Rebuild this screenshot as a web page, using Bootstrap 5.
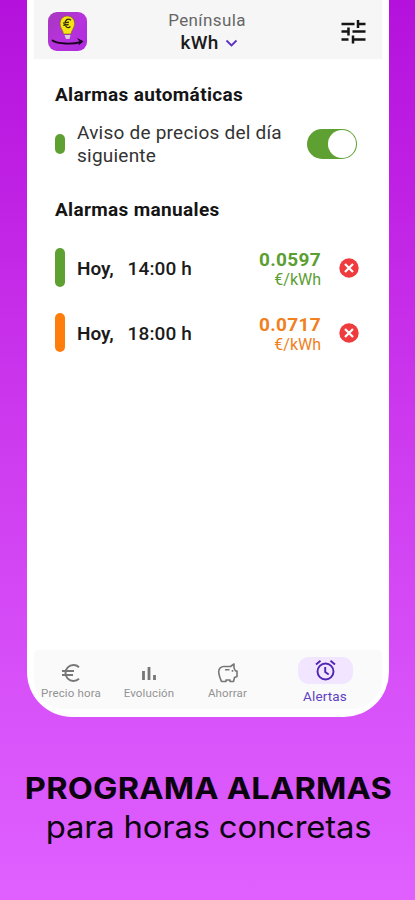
<!DOCTYPE html>
<html lang="es">
<head>
<meta charset="utf-8">
<meta name="viewport" content="width=device-width, initial-scale=1">
<title>Alarmas</title>
<link rel="stylesheet" href="https://cdn.jsdelivr.net/npm/bootstrap@5.3.0/dist/css/bootstrap.min.css">
<style>
body{font-family:Roboto,"Liberation Sans",sans-serif;color:#1b1b1b;height:900px;overflow:hidden;background:linear-gradient(180deg,#b412dc 0,#c022e4 200px,#cd3aee 430px,#d750f8 680px,#df60ff 900px)}
.phone{width:362px;height:717px;margin-left:27px;background:#fff;border-radius:0 0 45px 45px;padding:0 7px 8px}
.topbar{height:59px;background:#f6f6f6;padding:11px 16px 0 14px}
.logo{width:39px;height:40px;margin-top:1px}
.region{font-size:17px;line-height:20px;letter-spacing:.4px;color:#666;margin-top:-1px}
.unit{font-size:19px;line-height:26px;letter-spacing:.3px;font-weight:500;padding-left:4px}
.chevron{margin-left:6px}
.title-box{margin-right:14px}
.content{padding:0 21px}
.heading{font-size:19px;line-height:24px;font-weight:700;letter-spacing:.34px;color:#151515}
.heading-first{margin-top:24px}
.heading-next{margin-top:30px}
.auto-row{height:48px;margin-top:13px}
.notice{font-size:19px;line-height:23px;letter-spacing:.23px;color:#333;width:230px}
.pill{width:10px;border-radius:5px;flex:none;margin-right:12px}
.pill-sm{height:20px}
.pill-lg{height:39px}
.green{color:#5b9e32}.orange{color:#f08020}
.bg-green{background:#5fa033}.bg-orange{background:#ff7d0a}
.switch{width:50px;height:30px;border-radius:15px;background:#5fa033;padding:1px}
.knob{width:28px;height:28px;border-radius:50%;background:#fff}
.alarm-list{padding-top:13px}
.alarm{height:65px}
.day,.hour{padding-top:3px}
.day{font-size:19px;font-weight:600;letter-spacing:0;width:50.5px}
.hour{font-size:19px;font-weight:500;letter-spacing:.15px}
.price{font-size:19px;line-height:23px;font-weight:700;letter-spacing:.35px}
.price-box{padding-top:1px}
.per{font-size:16px;line-height:18px;letter-spacing:0}
.remove{width:20px;height:20px;margin:0 2px 0 18px;flex:none}
.tabs{height:59px;background:#fafafa;border-radius:4px 4px 30px 30px}
.tab{font-size:11.500px;line-height:14px;letter-spacing:.15px;color:#929292;padding-top:13px}
.tab svg{margin-bottom:3px}
.tab-active{font-size:13.500px;line-height:16px;color:#6040c4;padding:7px 0 0 3px}
.tab-pill{width:55px;height:27px;border-radius:11px;background:#f1e5ff;margin-bottom:4px}
.tab-pill svg{margin:0}
.caption{font-family:Inter,"Liberation Sans",sans-serif;color:#0c0310;margin-top:52px;padding-left:2px}
.cap-a{font-size:30px;line-height:38px;font-weight:700;letter-spacing:.2px;transform:scaleX(1.085)}
.cap-b{font-size:31px;line-height:39px;font-weight:400;letter-spacing:-.2px;transform:scaleX(1.06)}
</style>
<script src="https://cdn.jsdelivr.net/npm/bootstrap@5.3.0/dist/js/bootstrap.bundle.min.js"></script>
</head>
<body>
<main class="phone d-flex flex-column">
  <header class="topbar d-flex justify-content-between align-items-start">
    <svg class="logo" viewBox="0 0 39 40">
      <defs><linearGradient id="lg" x1="0" y1="0" x2="1" y2="1"><stop offset="0" stop-color="#a637bd"/><stop offset=".5" stop-color="#b633dc"/><stop offset="1" stop-color="#b02ae0"/></linearGradient></defs>
      <rect width="39" height="39" rx="9" fill="url(#lg)"/>
      <path d="M15.500 22C15 18 12 16 12 11.200a7.300 7.300 0 0 1 14.600 0c0 4.800-3 6.800-3.600 10.800z" fill="#f7e413" stroke="#756015" stroke-width=".6"/>
      <path d="M16.500 23h6l-1 4h-3.500z" fill="#d7c9df"/>
      <path d="M23 8.300c-3-2.600-6.200-.4-6 3.500.2 3.200 3 5 5.400 2.700M15 11.200l6-1M15.200 13.300l5.400-.8" fill="none" stroke="#312b05" stroke-width="1.300"/>
      <path d="M4.500 28.500c5 3.500 20 4.200 29 1.300" fill="none" stroke="#18031d" stroke-width="1.900" stroke-linecap="round"/>
      <path d="M29 26l6.500 3.300-5 4.200 1-4z" fill="#18031d"/>
    </svg>
    <div class="title-box text-center">
      <div class="region">Península</div>
      <div class="unit d-flex align-items-center justify-content-center">kWh
        <svg class="chevron" width="13" height="9" viewBox="0 0 13 9"><path d="M1.500 1.500l5 5 5-5" fill="none" stroke="#5a31c8" stroke-width="1.800"/></svg>
      </div>
    </div>
    <svg class="mt-2" width="25" height="25" viewBox="0 0 25 25" stroke="#151515" stroke-width="2.500" fill="none"><path d="M.5 5h13M17 5h7.500M17 1v8M.5 12.500h7M11.500 12.500h13M7.500 8.500v8M.5 20.500h7M12 20.500h12.500M12 16.500v8"/></svg>
  </header>
  <section class="content flex-grow-1">
    <h2 class="heading heading-first mb-0">Alarmas automáticas</h2>
    <div class="auto-row d-flex align-items-center">
      <span class="pill pill-sm bg-green"></span>
      <div class="notice">Aviso de precios del día siguiente</div>
      <div class="switch d-flex justify-content-end"><span class="knob"></span></div>
    </div>
    <h2 class="heading heading-next mb-0">Alarmas manuales</h2>
    <div class="alarm-list">
      <div class="alarm d-flex align-items-center">
        <span class="pill pill-lg bg-green"></span>
        <span class="day">Hoy,</span><span class="hour">14:00 h</span>
        <div class="price-box ms-auto text-end green"><div class="price">0.0597</div><div class="per">€/kWh</div></div>
        <svg class="remove" viewBox="0 0 20 20"><circle cx="10" cy="10" r="9.700" fill="#ef3b3d"/><path d="M6 6l8 8M14 6l-8 8" stroke="#fff" stroke-width="2.200"/></svg>
      </div>
      <div class="alarm d-flex align-items-center">
        <span class="pill pill-lg bg-orange"></span>
        <span class="day">Hoy,</span><span class="hour">18:00 h</span>
        <div class="price-box ms-auto text-end orange"><div class="price">0.0717</div><div class="per">€/kWh</div></div>
        <svg class="remove" viewBox="0 0 20 20"><circle cx="10" cy="10" r="9.700" fill="#ef3b3d"/><path d="M6 6l8 8M14 6l-8 8" stroke="#fff" stroke-width="2.200"/></svg>
      </div>
    </div>
  </section>
  <nav class="tabs d-flex">
    <div class="tab d-flex flex-column align-items-center" style="width:74px">
      <svg width="20" height="20" viewBox="0 0 20 20" fill="none" stroke="#777" stroke-width="2"><path d="M18 4.200A8 8 0 1 0 18 15.800M1 8h12M1 12h11"/></svg>
      <span class="text-nowrap">Precio hora</span>
    </div>
    <div class="tab d-flex flex-column align-items-center" style="width:82px">
      <svg width="20" height="20" viewBox="0 0 20 20" fill="none" stroke="#777" stroke-width="2.800"><path d="M4.500 8v9M10 4v13M15.500 12v5"/></svg>
      <span>Evolución</span>
    </div>
    <div class="tab d-flex flex-column align-items-center" style="width:75px">
      <svg width="22" height="20" viewBox="0 0 22 20" fill="none" stroke="#777" stroke-width="1.600" stroke-linejoin="round"><path d="M7 3.500h6.500L17 1v4l1.500 3H20v5.500l-2.500 1-1 4H13V17H9v1.500H4.500C3 15 1.700 12 1.700 8.500a5 5 0 0 1 5.300-5z"/><path d="M8 6.700h4.500M15.500 7v1.800"/></svg>
      <span>Ahorrar</span>
    </div>
    <div class="tab tab-active d-flex flex-column align-items-center flex-grow-1">
      <div class="tab-pill d-flex align-items-center justify-content-center">
        <svg width="21" height="21" viewBox="0 0 21 21" fill="none" stroke="#4e25b5" stroke-width="1.900"><circle cx="10.500" cy="11.500" r="8"/><path d="M10.200 7v5l3.500 2.500M1 4.500l4.500-3.700M15.500.8L20 4.500"/></svg>
      </div>
      <span>Alertas</span>
    </div>
  </nav>
</main>
<footer class="caption text-center text-nowrap">
  <div class="cap-a">PROGRAMA ALARMAS</div>
  <div class="cap-b">para horas concretas</div>
</footer>
</body>
</html>
